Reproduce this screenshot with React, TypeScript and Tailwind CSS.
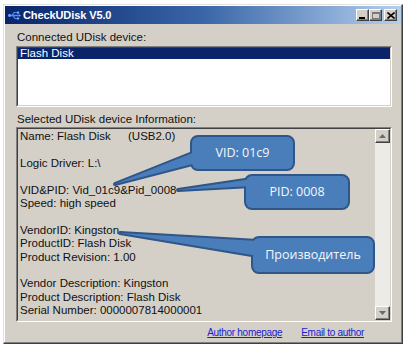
const raised =
  "bg-[#d4d0c8] border border-t-white border-l-white border-r-[#404040] border-b-[#404040] shadow-[inset_-1px_-1px_0_#808080]";

function TitleButton({ children, className = "" }: { children: React.ReactNode; className?: string }) {
  return (
    <div className={`${raised} w-[13px] h-[12px] flex items-center justify-center ${className}`}>
      {children}
    </div>
  );
}

function TitleBar() {
  return (
    <div className="h-[18px] flex items-center bg-linear-to-r from-[#0a246a] via-[#3a66a8] to-[#b5d0ee] pl-[3px] pr-[4px]">
      {/* usb icon */}
      <svg width="13" height="11" viewBox="0 0 13 11" className="shrink-0">
        <path d="M1 5.5h10" stroke="#4f8ff0" strokeWidth="1.6" />
        <path d="M4 5.5l2-3h3M5 5.5l2 3h2" stroke="#4f8ff0" strokeWidth="1.2" fill="none" />
        <circle cx="1.5" cy="5.5" r="1.4" fill="#6fa8ff" />
        <rect x="9" y="1.5" width="2.2" height="2.2" fill="#6fa8ff" />
        <circle cx="10" cy="8.5" r="1.2" fill="#6fa8ff" />
        <path d="M11 4.2l2 1.3-2 1.3z" fill="#6fa8ff" />
      </svg>
      <span className="ml-[2px] text-white font-bold text-[11px] leading-none tracking-[-0.1px]">CheckUDisk V5.0</span>
      <div className="ml-auto flex items-center">
        <TitleButton>
          <div className="w-[6px] h-[2px] bg-black mt-[5px] -ml-[1px]" />
        </TitleButton>
        <TitleButton>
          <div className="w-[8px] h-[7px] border border-t-2 border-[#7a7a7a]" />
        </TitleButton>
        <TitleButton className="ml-[2px]">
          <svg width="8" height="7" viewBox="0 0 8 7">
            <path d="M0.5 0.5l7 6M7.5 0.5l-7 6" stroke="#000" strokeWidth="1.6" />
          </svg>
        </TitleButton>
      </div>
    </div>
  );
}

function Sunken({ className = "", children }: { className?: string; children: React.ReactNode }) {
  return (
    <div className={`border border-t-[#808080] border-l-[#808080] border-r-white border-b-white ${className}`}>
      <div className="h-full border border-t-[#404040] border-l-[#404040] border-r-[#d4d0c8] border-b-[#d4d0c8]">
        {children}
      </div>
    </div>
  );
}

function Arrow({ up }: { up: boolean }) {
  return (
    <svg width="7" height="4" viewBox="0 0 7 4">
      <path d={up ? "M3.5 0L7 4H0z" : "M0 0h7L3.5 4z"} fill="#6a6a6a" />
    </svg>
  );
}

const infoLines: (string | null)[] = [
  "NAME",
  null,
  "Logic Driver: L:\\",
  null,
  "VID&PID: Vid_01c9&Pid_0008",
  "Speed: high speed",
  null,
  "VendorID: Kingston",
  "ProductID: Flash Disk",
  "Product Revision: 1.00",
  null,
  "Vendor Description: Kingston",
  "Product Description: Flash Disk",
  "Serial Number: 0000007814000001",
];

function Window() {
  return (
    <div className="w-[400px] h-[340px] bg-[#d4d0c8] border border-t-[#e4e2de] border-l-[#e4e2de] border-r-[#404040] border-b-[#404040] p-px shadow-[inset_-1px_-1px_0_#808080,inset_1px_1px_0_#ffffff] flex flex-col">
      <TitleBar />
      <div className="flex-1 flex flex-col pl-[11px] pr-[9px] pt-[7px] text-[11.5px] text-[#111]">
        <div className="h-[13px] leading-[13px] pl-px">Connected UDisk device:</div>
        <Sunken className="mt-[2px] h-[61px]">
          <div className="h-full bg-white">
            <div className="h-[11px] leading-[11px] bg-[#0a246a] text-white pl-[2px]">Flash Disk</div>
          </div>
        </Sunken>
        <div className="mt-[6px] h-[13px] leading-[13px] pl-px">Selected UDisk device Information:</div>
        <Sunken className="mt-px h-[195px]">
          <div className="h-full flex">
            <div className="flex-1 pl-[2px] pt-px leading-[13.4px]">
              {infoLines.map((l, i) =>
                l === "NAME" ? (
                  <div key={i} className="h-[13.4px] whitespace-nowrap">
                    <span className="inline-block w-[108px]">Name: Flash Disk</span>
                    <span>(USB2.0)</span>
                  </div>
                ) : (
                  <div key={i} className="h-[13.4px] whitespace-nowrap">
                    {l ?? ""}
                  </div>
                )
              )}
            </div>
            <div className="w-[15px] flex flex-col">
              <div className={`${raised} h-[14px] flex items-center justify-center`}>
                <Arrow up />
              </div>
              <div className="flex-1 bg-[#ecebe8]" />
              <div className={`${raised} h-[14px] flex items-center justify-center`}>
                <Arrow up={false} />
              </div>
            </div>
          </div>
        </Sunken>
        <div className="mt-[4px] flex justify-end gap-[19px] pr-[28px] text-[10px] leading-[13px] tracking-[-0.3px] text-[#2020d0]">
          <span className="underline">Author homepage</span>
          <span className="underline">Email to author</span>
        </div>
      </div>
    </div>
  );
}

type Call = {
  x: number;
  y: number;
  w: number;
  h: number;
  wedge: string;
  text: string;
};

const callouts: Call[] = [
  { x: 192, y: 137, w: 101, h: 32, wedge: "115,184 200,150 200,162", text: "VID: 01c9" },
  { x: 246, y: 176, w: 102, h: 32, wedge: "178,190 252,179 252,186", text: "PID: 0008" },
  { x: 253, y: 238, w: 120, h: 34, wedge: "120,233 258,241 258,256", text: "Производитель" },
];

function Callouts() {
  return (
    <>
      <svg className="absolute left-0 top-0 pointer-events-none" width="410" height="349">
        {callouts.map((c, i) => (
          <g key={i}>
            <rect x={c.x} y={c.y} width={c.w} height={c.h} rx="6" fill="none" stroke="#2f5688" strokeWidth="4" />
            <polygon points={c.wedge} fill="none" stroke="#2f5688" strokeWidth="4" strokeLinejoin="round" />
            <rect x={c.x} y={c.y} width={c.w} height={c.h} rx="6" fill="#4a7ebb" />
            <polygon points={c.wedge} fill="#4a7ebb" />
          </g>
        ))}
      </svg>
      {callouts.map((c, i) => (
        <div
          key={i}
          className="absolute flex items-center justify-center text-[#f4f6fa] text-[12.5px] font-['Open_Sans',sans-serif]"
          style={{ left: c.x, top: c.y, width: c.w, height: c.h }}
        >
          {c.text}
        </div>
      ))}
    </>
  );
}

export default function App() {
  return (
    <div className="relative w-[410px] h-[349px] bg-white pt-[4px] pl-[3px] overflow-hidden font-['Liberation_Sans',Arial,sans-serif]">
      <Window />
      <Callouts />
    </div>
  );
}
